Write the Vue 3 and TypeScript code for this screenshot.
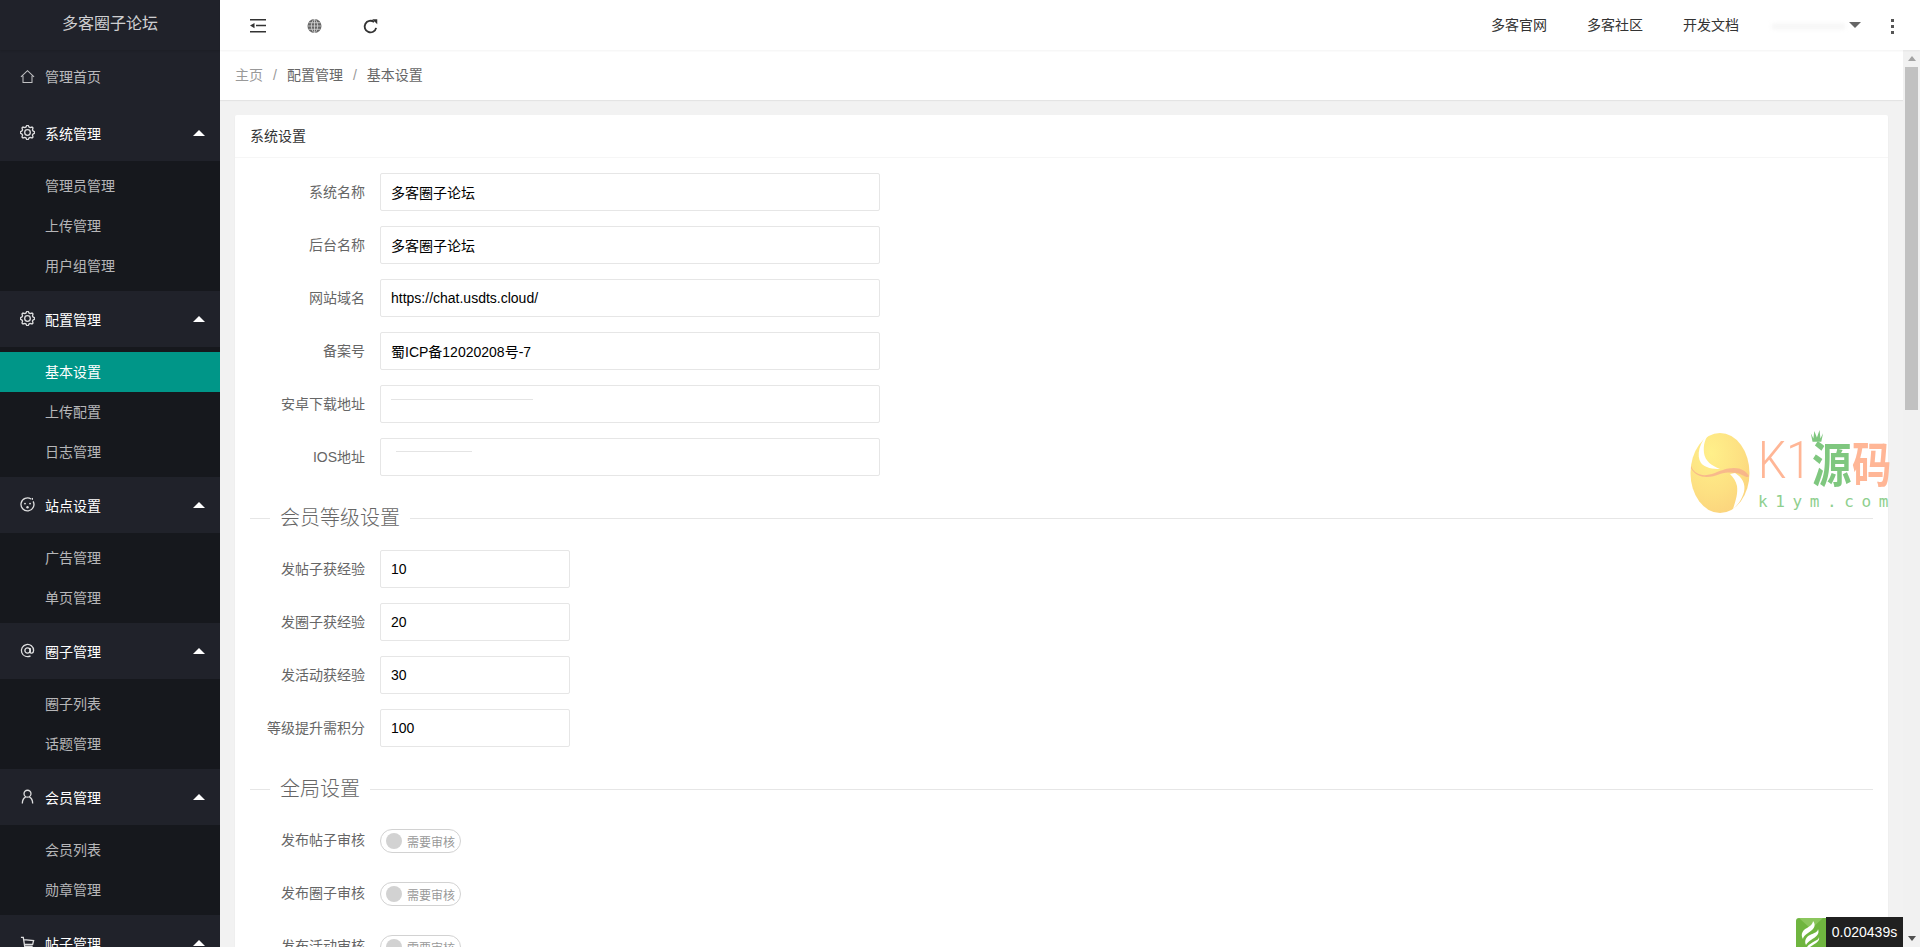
<script setup lang="ts">
interface Group { name: string; icon: string; children: string[] }
const groups: Group[] = [
  { name: '系统管理', icon: 'gear', children: ['管理员管理', '上传管理', '用户组管理'] },
  { name: '配置管理', icon: 'gear', children: ['基本设置', '上传配置', '日志管理'] },
  { name: '站点设置', icon: 'face', children: ['广告管理', '单页管理'] },
  { name: '圈子管理', icon: 'at', children: ['圈子列表', '话题管理'] },
  { name: '会员管理', icon: 'user', children: ['会员列表', '勋章管理'] },
  { name: '帖子管理', icon: 'cart', children: [] },
]
const gearPath = (() => {
  const teeth = 8
  const pts: string[] = []
  for (let i = 0; i < teeth * 4; i++) {
    const r = i % 4 === 0 || i % 4 === 1 ? 7.6 : 6
    const a = ((i - 0.5) / (teeth * 4)) * Math.PI * 2
    pts.push(`${(8 + r * Math.cos(a)).toFixed(2)} ${(8 + r * Math.sin(a)).toFixed(2)}`)
  }
  return 'M' + pts.join('L') + 'Z'
})()
const basics = [
  { label: '系统名称', value: '多客圈子论坛' },
  { label: '后台名称', value: '多客圈子论坛' },
  { label: '网站域名', value: 'https://chat.usdts.cloud/' },
  { label: '备案号', value: '蜀ICP备12020208号-7' },
  { label: '安卓下载地址', value: '', smudge: 'a' },
  { label: 'IOS地址', value: '', smudge: 'b' },
]
const levels = [
  { label: '发帖子获经验', value: '10' },
  { label: '发圈子获经验', value: '20' },
  { label: '发活动获经验', value: '30' },
  { label: '等级提升需积分', value: '100' },
]
const audits = ['发布帖子审核', '发布圈子审核', '发布活动审核']
</script>

<template>
  <div class="layout">
    <aside class="side">
      <div class="logo">多客圈子论坛</div>
      <div class="nav-item home">
        <svg class="icon" viewBox="0 0 16 16"><path d="M1 8.500 8 1.800l7 6.700M3.200 7.200v7.300h9.600V7.200" /></svg>
        <span>管理首页</span>
      </div>
      <template v-for="g in groups" :key="g.name">
        <div class="nav-item open">
          <svg v-if="g.icon === 'gear'" class="icon strong" viewBox="0 0 16 16"><path :d="gearPath" /><circle cx="8" cy="8" r="3" /></svg>
          <svg v-else-if="g.icon === 'face'" class="icon strong" viewBox="0 0 16 16">
            <path d="M11.800 2.200A6.900 6.900 0 1 0 14 4.600" /><circle cx="5.300" cy="7" r="1" class="solid" /><circle cx="10.700" cy="7" r="1" class="solid" /><circle cx="8" cy="11" r="1.300" class="solid" /><path d="M13.200 1v2" />
          </svg>
          <svg v-else-if="g.icon === 'at'" class="icon strong" viewBox="0 0 16 16">
            <circle cx="8" cy="8" r="2.800" /><path d="M10.800 5.200v4.300c0 2 3.700 2 3.700-1.500A6.500 6.500 0 1 0 11.200 13.700" />
          </svg>
          <svg v-else-if="g.icon === 'user'" class="icon strong" viewBox="0 0 16 16">
            <circle cx="8" cy="5" r="3.700" /><path d="M2.500 15.500c0-4 1.800-6 3.500-6.800M13.500 15.500c0-4-1.800-6-3.500-6.800" />
          </svg>
          <svg v-else class="icon strong" viewBox="0 0 16 16"><path d="M1 2.500h2.500L5 12h8.500M4 5l10.500 1-1 4H5" /></svg>
          <span>{{ g.name }}</span>
          <i class="caret"></i>
        </div>
        <div v-if="g.children.length" class="child">
          <div v-for="c in g.children" :key="c" class="child-item" :class="{ active: c === '基本设置' }">{{ c }}</div>
        </div>
      </template>
    </aside>

    <div class="right">
      <header class="top">
        <div class="tools">
          <div class="tool">
            <svg viewBox="0 0 16 14" class="tool-svg"><path d="M0 0h16v1.500H0zM6 5.800h10v1.500H6zM0 12h16v1.500H0zM4.500 4v5.200L0 6.600z" /></svg>
          </div>
          <div class="tool">
            <svg viewBox="0 0 16 16" class="tool-svg globe">
              <circle cx="8" cy="8" r="7.500" class="disc" />
              <path d="M.5 8h15M1.500 4.500h13M1.500 11.500h13M8 .5v15M8 .5C3.500 4 3.500 12 8 15.500M8 .5c4.500 3.500 4.500 11.500 0 15" />
            </svg>
          </div>
          <div class="tool">
            <svg viewBox="0 0 16 16" class="tool-svg arc">
              <path d="M14 9.500A6.200 6.200 0 1 1 11.800 3.200" /><path d="M9.800 .2h5.400v5.400z" class="fillpath" />
            </svg>
          </div>
        </div>
        <div class="links">
          <a class="link">多客官网</a>
          <a class="link">多客社区</a>
          <a class="link">开发文档</a>
          <div class="user"><span class="user-smudge"></span><i class="down"></i></div>
          <div class="more"><i></i><i></i><i></i></div>
        </div>
      </header>

      <div class="body">
        <main class="scroll">
          <nav class="crumb">
            <span class="home-link">主页</span><span class="sep">/</span><span>配置管理</span><span class="sep">/</span><span>基本设置</span>
          </nav>
          <div class="wrap">
            <section class="card">
              <div class="card-head">系统设置</div>
              <div class="form">
                <div v-for="r in basics" :key="r.label" class="row">
                  <label class="lab">{{ r.label }}</label>
                  <div class="field">
                    <input class="inp" :value="r.value" readonly />
                    <span v-if="r.smudge" class="smudge" :class="r.smudge"></span>
                  </div>
                </div>
                <div class="legend"><i class="lead"></i><span>会员等级设置</span><i class="rest"></i></div>
                <div v-for="r in levels" :key="r.label" class="row">
                  <label class="lab">{{ r.label }}</label>
                  <input class="inp short" :value="r.value" readonly />
                </div>
                <div class="legend"><i class="lead"></i><span>全局设置</span><i class="rest"></i></div>
                <div v-for="a in audits" :key="a" class="row">
                  <label class="lab">{{ a }}</label>
                  <div class="switch"><i class="knob"></i><em>需要审核</em></div>
                </div>
              </div>
            </section>
          </div>
        </main>
        <div class="bar">
          <i class="arrow up"></i>
          <div class="track"><div class="thumb"></div></div>
          <i class="arrow dn"></i>
        </div>
      </div>
    </div>

    <div class="mark">
      <svg class="egg" viewBox="0 0 60 82">
        <defs>
          <radialGradient id="eggFill" cx="35%" cy="25%" r="85%">
            <stop offset="0" stop-color="#fff08a" />
            <stop offset=".6" stop-color="#fde082" />
            <stop offset="1" stop-color="#fbd27c" />
          </radialGradient>
        </defs>
        <ellipse cx="30" cy="41" rx="29.500" ry="40" fill="url(#eggFill)" />
        <path d="M1 34C4 42 12 45 22 42 30 39 36 36 44 36 51 36 56 39 59 44 58 46 56 45 52 43 46 40 38 40 30 42 18 47 6 46 1 36Z" fill="#f6a98e" opacity=".75" />
        <path d="M20 1C9 9 6 24 11 31 15 36 23 37 30 37 22 34 15 29 14 21 13 13 15 6 20 1Z" fill="#fff" />
        <path d="M45 41C52 45 56 52 54 60 52 67 48 73 43 77 46 68 48 61 47 54 46 49 43 45 40 42Z" fill="#fff" />
      </svg>
      <div class="brand">
        <div class="brand-top">
          <span class="k1">K1</span>
          <span class="han green">源<svg class="crown" viewBox="0 0 16 14"><path d="M1 3l3 5 1-7 3 6 3-7 1 8 3-5-2 8H3z" /></svg></span>
          <span class="han peach">码</span>
        </div>
        <div class="brand-sub">k1ym.com</div>
      </div>
    </div>

    <div class="timer">
      <svg class="flame" viewBox="0 0 30 29">
        <path d="M3 0h27v29H0V3a3 3 0 0 1 3-3z" fill="#6fb53f" />
        <path d="M3 0h24L15 11z" fill="#8bc65d" />
        <path d="M17 3c4 5 0 9-5 12-3 2-5 4-5 6-3-5 0-9 4-11 3-2 6-4 6-7Z M22 11c2 5-2 8-7 11-2 1-4 3-5 5-2-4 0-8 4-10 4-2 8-3 8-6Z M23 19c1 4-3 6-6 8l-3 2h-3c2-3 5-4 8-6 2-1 4-2 4-4Z" fill="#fff" />
      </svg>
      <span class="time">0.020439s</span>
    </div>
  </div>
</template>

<style scoped>
.layout { position: relative; display: grid; grid-template-columns: 220px 1fr; height: 947px; overflow: hidden; font-family: "Liberation Sans", "Noto Sans CJK SC", sans-serif; font-size: 14px; color: #666; }
.side { background: #20222a; height: 947px; overflow: hidden; }
.logo { height: 50px; line-height: 47px; text-align: center; font-size: 16px; color: rgba(255, 255, 255, .8); box-shadow: 0 1px 2px rgba(0, 0, 0, .12); }
.nav-item { height: 56px; display: flex; align-items: center; padding-left: 20px; position: relative; color: #fff; padding-bottom: 1px; box-sizing: border-box; }
.nav-item.home { height: 55px; color: rgba(255, 255, 255, .7); padding-bottom: 3px; }
.nav-item span { margin-left: 10px; }
.icon { width: 15px; height: 15px; fill: none; stroke: rgba(255, 255, 255, .72); stroke-width: 1.1; flex: none; }
.icon.strong { stroke: rgba(255, 255, 255, .85); stroke-width: 1.4; }
.icon .solid { fill: rgba(255, 255, 255, .85); stroke: none; }
.caret { position: absolute; left: 193px; top: 25px; width: 0; height: 0; border: 6px solid transparent; border-top: 0; border-bottom: 6px solid #fff; }
.child { background: #16181d; padding: 5px 0; }
.child-item { height: 40px; line-height: 40px; padding-left: 45px; color: rgba(255, 255, 255, .7); }
.child-item.active { background: #009688; color: #fff; }

.right { min-width: 0; display: flex; flex-direction: column; height: 947px; }
.top { flex: none; height: 50px; display: flex; justify-content: space-between; background: #fff; box-shadow: 0 1px 2px rgba(0, 0, 0, .05); position: relative; z-index: 2; color: #333; }
.tools, .links { display: flex; align-items: center; }
.tools { padding-left: 10px; }
.tool { width: 56px; display: flex; justify-content: center; padding-top: 2px; }
.tool-svg { width: 16px; height: 14px; fill: #333; display: block; }
.tool-svg.globe { fill: none; stroke: #ddd; stroke-width: .8; height: 16px; width: 15px; }
.tool-svg .disc { fill: #666; stroke: none; }
.tool-svg.arc { fill: none; stroke: #333; stroke-width: 2; height: 15px; width: 15px; }
.tool-svg .fillpath { fill: #333; stroke: none; }
.links { padding-right: 8px; }
.link { padding: 0 20px; line-height: 48px; color: #333; }
.user { width: 113px; height: 50px; position: relative; }
.user-smudge { position: absolute; left: 13px; top: 24px; width: 73px; height: 5px; background: #f4f4f4; filter: blur(2px); }
.down { position: absolute; left: 90px; top: 22px; width: 0; height: 0; border: 6px solid transparent; border-bottom: 0; border-top: 6px solid #666; }
.more { width: 40px; display: flex; flex-direction: column; align-items: center; gap: 3px; padding-top: 2px; }
.more i { width: 3px; height: 3px; background: #555; }

.body { flex: 1; min-height: 0; display: flex; }
.scroll { flex: 1; min-width: 0; overflow: hidden; background: #f2f2f2; }
.bar { width: 17px; flex: none; background: #f1f1f1; display: flex; flex-direction: column; align-items: center; }
.track { flex: 1; width: 13px; }
.thumb { height: 343px; background: #c1c1c1; }
.arrow { display: block; width: 0; height: 0; margin: 6px 0; border: 4px solid transparent; }
.arrow.up { border-top: 0; border-bottom: 5px solid #a3a3a3; }
.arrow.dn { border-bottom: 0; border-top: 5px solid #505050; }
.crumb { height: 50px; line-height: 50px; padding-left: 15px; background: #fff; box-sizing: border-box; color: #666; white-space: nowrap; box-shadow: 0 1px 1px #e4e4e4; position: relative; }
.home-link { color: #999; }
.sep { margin: 0 10px; color: #999; }
.wrap { padding: 15px; }
.card { background: #fff; border-radius: 2px; min-height: 2177px; box-shadow: 0 1px 2px rgba(0, 0, 0, .05); }
.card-head { height: 43px; line-height: 42px; padding-left: 15px; border-bottom: 1px solid #f6f6f6; color: #333; box-sizing: border-box; }
.form { padding: 15px 15px 0; }
.row { display: flex; align-items: center; height: 38px; margin-bottom: 15px; }
.lab { width: 115px; margin-right: 15px; text-align: right; color: #666; flex: none; white-space: nowrap; position: relative; top: -1px; }
.field { position: relative; }
.inp { display: block; width: 500px; height: 38px; box-sizing: border-box; border: 1px solid #e6e6e6; border-radius: 2px; background: #fff; padding: 0 10px; font: 14px "Liberation Sans", "Noto Sans CJK SC", sans-serif; color: #000; outline: none; }
.inp.short { width: 190px; }
.smudge { position: absolute; height: 1px; background: #e4e4e4; }
.smudge.a { left: 11px; top: 14px; width: 142px; }
.smudge.b { left: 16px; top: 13px; width: 76px; }
.legend { display: flex; align-items: center; height: 30px; margin: 27px 0 17px; font-size: 20px; font-weight: 300; color: #666; line-height: 30px; }
.legend span { padding: 0 10px; }
.lead { width: 20px; height: 1px; background: #e6e6e6; }
.rest { flex: 1; height: 1px; background: #e6e6e6; }
.switch { width: 81px; height: 24px; box-sizing: border-box; border: 1px solid #d2d2d2; border-radius: 20px; display: flex; align-items: center; padding-left: 5px; position: relative; top: 1px; }
.knob { width: 16px; height: 16px; border-radius: 50%; background: #d2d2d2; flex: none; }
.switch em { font-style: normal; font-size: 12px; color: #999; margin-left: 5px; white-space: nowrap; }

.mark { position: absolute; left: 1690px; top: 432px; width: 202px; height: 82px; display: flex; pointer-events: none; z-index: 3; }
.egg { width: 60px; height: 82px; flex: none; }
.brand { margin-left: 8px; width: 134px; }
.brand-top { display: flex; align-items: flex-start; height: 60px; line-height: 1; white-space: nowrap; }
.k1 { display: block; width: 52px; margin-top: 3px; font-size: 52px; line-height: 52px; color: #ffb696; font-family: Roboto, "Liberation Sans", sans-serif; font-weight: 300; transform: scaleX(.86); transform-origin: left center; }
.han { display: block; position: relative; width: 40px; margin-top: 0; font-size: 48px; line-height: 58px; font-weight: 700; font-family: "Noto Sans CJK SC", sans-serif; transform: scaleX(.82); transform-origin: left center; }
.green { color: #7fc77f; margin-left: 2px; }
.peach { color: #ffb696; }
.crown { position: absolute; left: -3px; top: -2px; width: 18px; height: 15px; fill: #7fc77f; }
.brand-sub { font-size: 16px; letter-spacing: 7.600px; color: #8ecf8e; line-height: 20px; white-space: nowrap; font-family: "DejaVu Sans Mono", monospace; }

.timer { position: absolute; left: 1796px; top: 917px; height: 30px; display: flex; align-items: flex-end; z-index: 4; }
.flame { width: 30px; height: 29px; display: block; }
.time { width: 77px; height: 30px; line-height: 30px; background: #202020; color: #fff; text-align: center; font-size: 14px; }
</style>

<style>
html, body { margin: 0; overflow: hidden; }
</style>
